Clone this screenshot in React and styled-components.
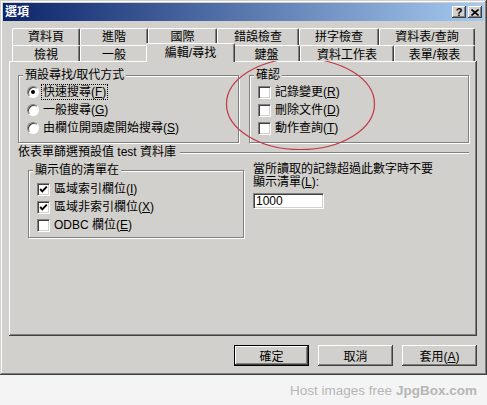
import React from 'react';
import styled, { createGlobalStyle, css } from 'styled-components';

const FACE = '#d2d0cc';

const GlobalStyle = createGlobalStyle`
  html, body {
    margin: 0;
    padding: 0;
    background: #f4f4f4;
  }
  body {
    font-family: "Liberation Sans", "Noto Sans CJK TC", sans-serif;
    font-size: 12px;
    color: #000;
  }
`;

const Page = styled.div`
  width: 487px;
  height: 405px;
  display: flex;
  flex-direction: column;
`;

const Window = styled.div`
  position: relative;
  width: 487px;
  height: 375px;
  box-sizing: border-box;
  padding: 3px;
  background: ${FACE};
  box-shadow: inset -1px -1px #404040, inset 1px 1px ${FACE}, inset -2px -2px #808080,
    inset 2px 2px #fff;
`;

const TitleBar = styled.div`
  height: 18px;
  display: flex;
  align-items: center;
  padding: 0 2px;
  background: linear-gradient(to right, #0a246a, #a6caf0);
`;

const Title = styled.span`
  flex: 1;
  color: #fff;
  font-weight: bold;
  font-size: 12px;
  line-height: 18px;
`;

const CaptionButton = styled.div`
  width: 14px;
  height: 12px;
  margin-left: 2px;
  box-sizing: border-box;
  display: flex;
  align-items: center;
  justify-content: center;
  background: ${FACE};
  box-shadow: inset -1px -1px #404040, inset 1px 1px #fff, inset -2px -2px #808080;
  font-family: "Liberation Sans", sans-serif;
  font-weight: bold;
  font-size: 11px;
  line-height: 12px;
`;

const Body = styled.div`
  padding: 7px 7px 0 6px;
`;

const TabStrip = styled.div`
  position: relative;
  z-index: 1;
  margin-left: 3px;
`;

const TabRow = styled.div`
  display: flex;
  align-items: flex-start;
  height: ${(p) => p.$h}px;
`;

const Tab = styled.div`
  box-sizing: border-box;
  width: ${(p) => p.$w}px;
  height: ${(p) => p.$h}px;
  flex: none;
  text-align: center;
  white-space: nowrap;
  background: ${FACE};
  border-top: 1px solid #fff;
  border-left: 1px solid #fff;
  border-right: 1px solid #404040;
  border-radius: 2px 2px 0 0;
  box-shadow: inset -1px 0 #808080;
  line-height: 15px;
  padding-top: ${(p) => p.$pt}px;
  ${(p) =>
    p.$selected &&
    css`
      position: relative;
      z-index: 2;
      width: ${p.$w + 4}px;
      height: ${p.$h + 3}px;
      margin: -2px -2px 0;
      padding-top: 2px;
    `}
`;

const Panel = styled.div`
  height: 275px;
  box-sizing: border-box;
  padding: 1px 8px 0 9px;
  box-shadow: inset -1px -1px #404040, inset 1px 1px #fff, inset -2px -2px #808080;
`;

const GroupRow = styled.div`
  display: flex;
  align-items: flex-start;
  margin-top: ${(p) => p.$mt}px;
`;

const Group = styled.div`
  position: relative;
  flex: none;
  box-sizing: border-box;
  width: ${(p) => p.$w}px;
  height: 68px;
  margin-top: ${(p) => p.$mt || 0}px;
  margin-left: ${(p) => p.$ml || 0}px;
  padding: ${(p) => p.$pt}px 0 0 8px;
  border: 1px solid #808080;
  box-shadow: 1px 1px 0 #fff, inset 1px 1px 0 #fff;
`;

const Legend = styled.span`
  position: absolute;
  top: -8px;
  left: 4px;
  padding: 0 2px;
  background: ${FACE};
  line-height: 14px;
  white-space: nowrap;
`;

const Option = styled.div`
  display: flex;
  align-items: center;
  gap: 4px;
  height: 18px;
`;

const Label = styled.span`
  line-height: 14px;
  white-space: nowrap;
  ${(p) =>
    p.$focus &&
    css`
      outline: 1px dotted #000;
      padding: 0 1px;
      margin-left: -1px;
    `}
`;

const Radio = styled.span`
  position: relative;
  flex: none;
  width: 12px;
  height: 12px;
  box-sizing: border-box;
  border-radius: 50%;
  background: #fff;
  border: 1px solid;
  border-color: #808080 #fff #fff #808080;
  box-shadow: inset 1px 1px #404040;

  &::after {
    content: '';
    display: ${(p) => (p.$on ? 'block' : 'none')};
    position: absolute;
    left: 3px;
    top: 3px;
    width: 4px;
    height: 4px;
    border-radius: 50%;
    background: #000;
  }
`;

const CheckBox = styled.span`
  flex: none;
  width: 13px;
  height: 13px;
  box-sizing: border-box;
  display: flex;
  align-items: center;
  justify-content: center;
  background: #fff;
  border: 1px solid;
  border-color: #808080 #fff #fff #808080;
  box-shadow: inset 1px 1px #404040, inset -1px -1px ${FACE};
`;

const SectionHead = styled.div`
  display: flex;
  align-items: center;
  height: 13px;
  margin-top: 3px;
  line-height: 13px;
  white-space: nowrap;
`;

const Rule = styled.span`
  flex: 1;
  margin-left: 4px;
  border-top: 1px solid #808080;
  border-bottom: 1px solid #fff;
`;

const LimitBox = styled.div`
  margin-left: 9px;
  line-height: 13px;
`;

const NumberInput = styled.input`
  display: block;
  width: 71px;
  height: 16px;
  box-sizing: border-box;
  margin: 4px 0 0;
  padding: 0 2px;
  font: inherit;
  font-size: 12px;
  line-height: 14px;
  color: #000;
  background: #fff;
  border: 1px solid;
  border-color: #808080 #fff #fff #808080;
  box-shadow: inset 1px 1px #404040, inset -1px -1px ${FACE};
  outline: none;
`;

const ButtonRow = styled.div`
  display: flex;
  justify-content: flex-end;
  gap: 9px;
  margin-top: 9px;
`;

const Button = styled.button`
  width: 75px;
  height: 21px;
  padding: 0;
  border: none;
  font: inherit;
  font-size: 12px;
  color: #000;
  background: ${FACE};
  box-shadow: inset -1px -1px #404040, inset 1px 1px #fff, inset -2px -2px #808080;
  ${(p) =>
    p.$default &&
    css`
      box-shadow: inset 0 0 0 1px #000, inset -2px -2px #404040, inset 2px 2px #fff,
        inset -3px -3px #808080;
    `}
`;

const Annotation = styled.svg`
  position: absolute;
  left: 225px;
  top: 57px;
  pointer-events: none;
`;

const Watermark = styled.div`
  flex: 1;
  display: flex;
  align-items: center;
  justify-content: flex-end;
  padding-right: 10px;
  font-family: "Liberation Sans", Arial, sans-serif;
  font-size: 13.5px;
  color: #b6b6b6;

  b {
    font-weight: bold;
    margin-left: 4px;
  }
`;

const backTabs = [
  ['資料頁', 68],
  ['進階', 68],
  ['國際', 69],
  ['錯誤檢查', 82],
  ['拼字檢查', 80],
  ['資料表/查詢', 96],
];

const frontTabs = [
  ['檢視', 68],
  ['一般', 68],
  ['編輯/尋找', 85, true],
  ['鍵盤', 67],
  ['資料工作表', 94],
  ['表單/報表', 81],
];

const Tick = () => (
  <svg width="9" height="9" viewBox="0 0 9 9">
    <polyline points="1.2,4 3.3,6.3 7.8,1.6" fill="none" stroke="#000" strokeWidth="1.9" />
  </svg>
);

const Check = ({ on }) => <CheckBox>{on && <Tick />}</CheckBox>;

const Key = ({ k }) => (
  <>
    (<u>{k}</u>)
  </>
);

const App = () => {
  return (
    <>
      <GlobalStyle />
      <Page>
        <Window>
          <TitleBar>
            <Title>選項</Title>
            <CaptionButton>?</CaptionButton>
            <CaptionButton>
              <svg width="8" height="7" viewBox="0 0 8 7">
                <path d="M0.5 0.5 L7.5 6.5 M7.5 0.5 L0.5 6.5" stroke="#000" strokeWidth="1.6" />
              </svg>
            </CaptionButton>
          </TitleBar>

          <Body>
            <TabStrip>
              <TabRow $h={17}>
                {backTabs.map(([name, w]) => (
                  <Tab key={name} $w={w} $h={17} $pt={1}>
                    {name}
                  </Tab>
                ))}
              </TabRow>
              <TabRow $h={16}>
                {frontTabs.map(([name, w, sel]) => (
                  <Tab key={name} $w={w} $h={16} $pt={2} $selected={sel}>
                    {name}
                  </Tab>
                ))}
              </TabRow>
            </TabStrip>

            <Panel>
              <GroupRow $mt={13}>
                <Group $w={221} $pt={7}>
                  <Legend>預設尋找/取代方式</Legend>
                  <Option>
                    <Radio $on />
                    <Label $focus>
                      快速搜尋<Key k="F" />
                    </Label>
                  </Option>
                  <Option>
                    <Radio />
                    <Label>
                      一般搜尋<Key k="G" />
                    </Label>
                  </Option>
                  <Option>
                    <Radio />
                    <Label>
                      由欄位開頭處開始搜尋<Key k="S" />
                    </Label>
                  </Option>
                </Group>

                <Group $w={220} $ml={10} $pt={7}>
                  <Legend>確認</Legend>
                  <Option>
                    <Check />
                    <Label>
                      記錄變更<Key k="R" />
                    </Label>
                  </Option>
                  <Option>
                    <Check />
                    <Label>
                      刪除文件<Key k="D" />
                    </Label>
                  </Option>
                  <Option>
                    <Check />
                    <Label>
                      動作查詢<Key k="T" />
                    </Label>
                  </Option>
                </Group>
              </GroupRow>

              <SectionHead>
                依表單篩選預設值 test 資料庫
                <Rule />
              </SectionHead>

              <GroupRow $mt={4}>
                <Group $w={216} $ml={10} $mt={7} $pt={9}>
                  <Legend>顯示值的清單在</Legend>
                  <Option>
                    <Check on />
                    <Label>
                      區域索引欄位<Key k="I" />
                    </Label>
                  </Option>
                  <Option>
                    <Check on />
                    <Label>
                      區域非索引欄位<Key k="X" />
                    </Label>
                  </Option>
                  <Option>
                    <Check />
                    <Label>
                      ODBC 欄位<Key k="E" />
                    </Label>
                  </Option>
                </Group>

                <LimitBox>
                  當所讀取的記錄超過此數字時不要
                  <br />
                  顯示清單<Key k="L" />:
                  <NumberInput defaultValue="1000" readOnly />
                </LimitBox>
              </GroupRow>
            </Panel>

            <ButtonRow>
              <Button $default>確定</Button>
              <Button>取消</Button>
              <Button>
                套用<Key k="A" />
              </Button>
            </ButtonRow>
          </Body>

          <Annotation width="152" height="95" viewBox="0 0 152 95">
            <ellipse cx="75.5" cy="47" rx="74" ry="45.5" fill="none" stroke="#c43646" strokeWidth="1.2" />
          </Annotation>
        </Window>

        <Watermark>
          Host images free<b>JpgBox.com</b>
        </Watermark>
      </Page>
    </>
  );
};

export default App;
